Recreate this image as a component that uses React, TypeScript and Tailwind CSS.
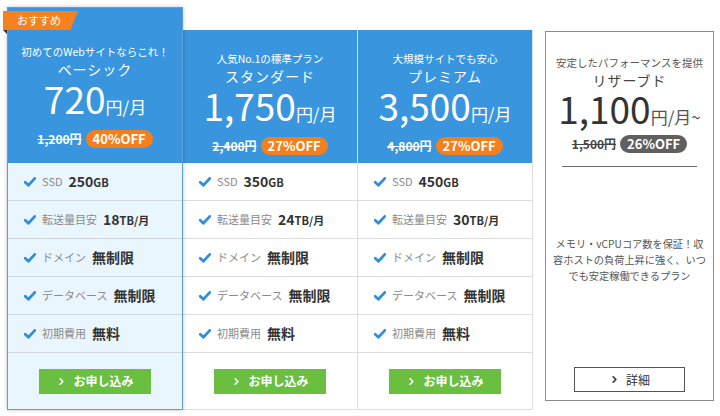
import { ChevronRight } from 'lucide-react';

type Plan = {
  sub: string;
  name: string;
  price: string;
  was: string;
  off: string;
  ssd: string;
  traffic: string;
};

const plans: Plan[] = [
  { sub: '初めてのWebサイトならこれ！', name: 'ベーシック', price: '720', was: '1,200円', off: '40%OFF', ssd: '250', traffic: '18' },
  { sub: '人気No.1の標準プラン', name: 'スタンダード', price: '1,750', was: '2,400円', off: '27%OFF', ssd: '350', traffic: '24' },
  { sub: '大規模サイトでも安心', name: 'プレミアム', price: '3,500', was: '4,800円', off: '27%OFF', ssd: '450', traffic: '30' },
];

function Check() {
  return (
    <svg width="12" height="10" viewBox="0 0 12 10" className="shrink-0">
      <path d="M1.2 5.2 L4.4 8.2 L10.8 1.4" fill="none" stroke="#2f8ee0" strokeWidth="2.8" strokeLinecap="round" strokeLinejoin="round" />
    </svg>
  );
}

function Row({ label, children, hot }: { label: string; children: React.ReactNode; hot?: boolean }) {
  return (
    <div className={`h-[38px] flex items-center pl-[16px] gap-[6px] border-b ${hot ? 'border-[#cfd6de]' : 'border-[#dddddd]'}`}>
      <Check />
      <span className="text-[11px] text-[#8a8a8a]">{label}</span>
      <span className="text-[14px] font-bold text-[#333]">{children}</span>
    </div>
  );
}

function PlanCard({ plan, hot }: { plan: Plan; hot?: boolean }) {
  return (
    <div
      className={`flex flex-col ${
        hot
          ? 'w-[176px] border border-[#5c9fd9] shadow-[0_0_4px_rgba(0,0,0,0.25)] relative z-10'
          : 'w-[175px] border-r border-[#dddddd]'
      }`}
    >
      {/* header */}
      <div
        className={`bg-[#3996de] flex flex-col items-center text-white ${
          hot ? 'h-[155px] pt-[37px]' : 'h-[133px] pt-[22px]'
        }`}
      >
        <div className="text-[10.5px] leading-[14px]">{plan.sub}</div>
        <div className="mt-[1px] text-[14px] leading-[18px] tracking-[1px]">{plan.name}</div>
        <div className="h-[40px] text-[37px] leading-[40px] whitespace-nowrap">
          {plan.price}
          <span className="text-[17px] leading-none">円/月</span>
        </div>
        <div className="mt-[12px] flex items-center gap-[4px]">
          <span className="text-[12px] font-bold line-through">{plan.was}</span>
          <span className="h-[18px] px-[7px] rounded-full bg-[#f57f1d] text-[13px] font-bold leading-[18px]">{plan.off}</span>
        </div>
      </div>
      {/* body */}
      <div className={`flex flex-col ${hot ? 'bg-[#eaf6fe]' : 'bg-white border-b border-[#dddddd]'}`}>
        <Row label="SSD" hot={hot}>
          {plan.ssd}
          <span className="text-[11px]">GB</span>
        </Row>
        <Row label="転送量目安" hot={hot}>
          {plan.traffic}
          <span className="text-[11px]">TB/月</span>
        </Row>
        <Row label="ドメイン" hot={hot}>無制限</Row>
        <Row label="データベース" hot={hot}>無制限</Row>
        <Row label="初期費用" hot={hot}>無料</Row>
        <div className="h-[56px] flex items-center justify-center">
          <button className="w-[112px] h-[25px] bg-[#6abf40] text-white text-[12px] font-bold flex items-center justify-center gap-[6px]">
            <ChevronRight size={11} strokeWidth={3.5} />
            お申し込み
          </button>
        </div>
      </div>
      {hot && (
        <div className="absolute left-[-5px] top-[3px]">
          <div className="relative h-[19px] w-[75px] bg-[#f5821f] [clip-path:polygon(0_0,100%_0,90%_100%,0_100%)] flex items-center pl-[14px] text-white text-[11px]">
            おすすめ
          </div>
          <div className="w-0 h-0 border-t-[4px] border-t-[#333] border-l-[4px] border-l-transparent" />
        </div>
      )}
    </div>
  );
}

export default function App() {
  return (
    <div className="w-[720px] h-[416px] bg-white flex items-start pl-[7px] pt-[7px] font-['Noto_Sans_CJK_JP','Noto_Sans',sans-serif]">
      <div className="flex items-end">
        {plans.map((p, i) => (
          <PlanCard key={p.name} plan={p} hot={i === 0} />
        ))}
      </div>

      {/* Reserved plan */}
      <div className="ml-[12px] mt-[24px] w-[169px] h-[370px] border border-[#8c8c8c] flex flex-col items-center pt-[24px]">
        <div className="text-[10.5px] leading-[14px] text-[#555]">安定したパフォーマンスを提供</div>
        <div className="mt-[1px] text-[14px] leading-[18px] tracking-[1px] text-[#444]">リザーブド</div>
        <div className="h-[38px] text-[37px] leading-[38px] whitespace-nowrap text-[#333]">
          1,100
          <span className="text-[17px] leading-none text-[#555]">円/月~</span>
        </div>
        <div className="mt-[8px] flex items-center gap-[4px]">
          <span className="text-[12px] font-bold line-through text-[#444]">1,500円</span>
          <span className="h-[18px] px-[7px] rounded-full bg-[#606060] text-white text-[13px] font-bold leading-[18px]">26%OFF</span>
        </div>
        <div className="mt-[13px] w-[135px] border-t border-[#6a6a6a]" />
        <p className="mt-[69px] text-center text-[10.2px] leading-[16px] text-[#555] whitespace-nowrap">
          メモリ・vCPUコア数を保証！収
          <br />
          容ホストの負荷上昇に強く、いつ
          <br />
          でも安定稼働できるプラン
        </p>
        <div className="mt-auto mb-[8px]">
          <button className="w-[111px] h-[25px] border border-[#555] bg-white text-[#333] text-[12px] flex items-center justify-center gap-[6px]">
            <ChevronRight size={11} strokeWidth={3.5} />
            詳細
          </button>
        </div>
      </div>
    </div>
  );
}
